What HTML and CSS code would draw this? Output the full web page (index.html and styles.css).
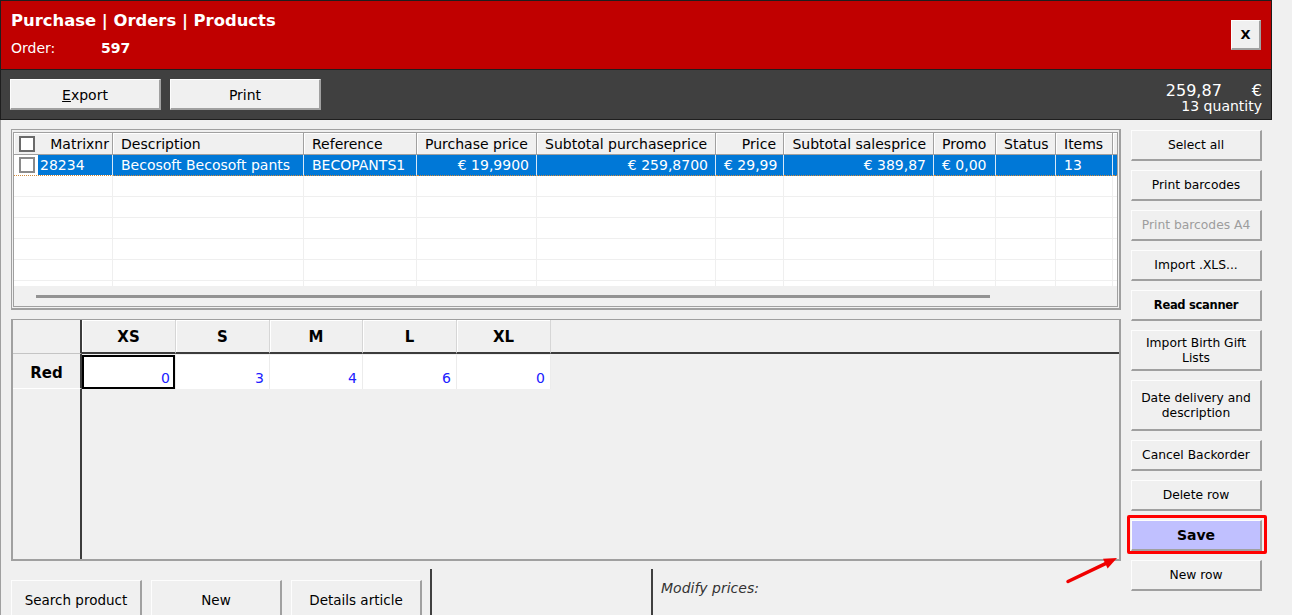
FILE: index.html
```html
<!DOCTYPE html>
<html lang="en">
<head>
  <meta charset="UTF-8">
  <title>Purchase | Orders | Products</title>
  <link rel="stylesheet" href="styles.css">
</head>
<body>

  <div class="window">
    <header class="titlebar">
      <div class="titles">
        <h1>Purchase | Orders | Products</h1>
        <div class="order"><span class="order-label">Order:</span><b>597</b></div>
      </div>
      <button class="btn close">X</button>
    </header>

    <div class="toolbar">
      <button class="btn tool"><u>E</u>xport</button>
      <button class="btn tool">Print</button>
      <div class="totals">
        <div class="amount"><span>259,87</span><span class="cur">€</span></div>
        <div class="qty">13 quantity</div>
      </div>
    </div>

    <div class="main">
      <div class="left">

        <div class="products">
          <div class="products-inner">
            <div class="rows">
              <div class="row head">
                <div class="cell first"><span class="check"></span><span>Matrixnr</span></div>
                <div class="cell">Description</div>
                <div class="cell">Reference</div>
                <div class="cell">Purchase price</div>
                <div class="cell">Subtotal purchaseprice</div>
                <div class="cell r">Price</div>
                <div class="cell r">Subtotal salesprice</div>
                <div class="cell">Promo</div>
                <div class="cell">Status</div>
                <div class="cell">Items</div>
                <div class="cell"></div>
              </div>
              <div class="row selected">
                <div class="cell first"><span class="check"></span><span class="val">28234</span></div>
                <div class="cell">Becosoft Becosoft pants</div>
                <div class="cell">BECOPANTS1</div>
                <div class="cell r">€ 19,9900</div>
                <div class="cell r">€ 259,8700</div>
                <div class="cell">€ 29,99</div>
                <div class="cell r">€ 389,87</div>
                <div class="cell">€ 0,00</div>
                <div class="cell"></div>
                <div class="cell">13</div>
                <div class="cell"></div>
              </div>
              <div class="row"><div class="cell"></div><div class="cell"></div><div class="cell"></div><div class="cell"></div><div class="cell"></div><div class="cell"></div><div class="cell"></div><div class="cell"></div><div class="cell"></div><div class="cell"></div><div class="cell"></div></div>
              <div class="row"><div class="cell"></div><div class="cell"></div><div class="cell"></div><div class="cell"></div><div class="cell"></div><div class="cell"></div><div class="cell"></div><div class="cell"></div><div class="cell"></div><div class="cell"></div><div class="cell"></div></div>
              <div class="row"><div class="cell"></div><div class="cell"></div><div class="cell"></div><div class="cell"></div><div class="cell"></div><div class="cell"></div><div class="cell"></div><div class="cell"></div><div class="cell"></div><div class="cell"></div><div class="cell"></div></div>
              <div class="row"><div class="cell"></div><div class="cell"></div><div class="cell"></div><div class="cell"></div><div class="cell"></div><div class="cell"></div><div class="cell"></div><div class="cell"></div><div class="cell"></div><div class="cell"></div><div class="cell"></div></div>
              <div class="row"><div class="cell"></div><div class="cell"></div><div class="cell"></div><div class="cell"></div><div class="cell"></div><div class="cell"></div><div class="cell"></div><div class="cell"></div><div class="cell"></div><div class="cell"></div><div class="cell"></div></div>
              <div class="row"><div class="cell"></div><div class="cell"></div><div class="cell"></div><div class="cell"></div><div class="cell"></div><div class="cell"></div><div class="cell"></div><div class="cell"></div><div class="cell"></div><div class="cell"></div><div class="cell"></div></div>
            </div>
            <div class="hscroll"><div class="thumb"></div></div>
          </div>
        </div>

        <div class="sizes">
          <div class="corner"></div>
          <div class="size-head">XS</div>
          <div class="size-head">S</div>
          <div class="size-head">M</div>
          <div class="size-head">L</div>
          <div class="size-head">XL</div>
          <div class="size-head empty"></div>

          <div class="color-head">Red</div>
          <div class="qty-cell current">0</div>
          <div class="qty-cell">3</div>
          <div class="qty-cell">4</div>
          <div class="qty-cell">6</div>
          <div class="qty-cell">0</div>
          <div class="fill"></div>

          <div class="color-fill"></div>
        </div>

        <div class="bottom">
          <button class="btn">Search product</button>
          <button class="btn">New</button>
          <button class="btn last">Details article</button>
          <div class="divider"></div>
          <div class="divider wide"></div>
          <div class="modify">Modify prices:</div>
        </div>
      </div>

      <div class="actions">
        <button class="btn">Select all</button>
        <button class="btn">Print barcodes</button>
        <button class="btn disabled">Print barcodes A4</button>
        <button class="btn">Import .XLS...</button>
        <button class="btn strong">Read scanner</button>
        <button class="btn two">Import Birth Gift Lists</button>
        <button class="btn tall">Date delivery and description</button>
        <button class="btn">Cancel Backorder</button>
        <button class="btn">Delete row</button>
        <button class="btn save">Save<span class="mark"></span></button>
        <button class="btn">New row</button>
      </div>
    </div>
  </div>

  <svg class="arrow" width="64" height="40" viewBox="0 0 64 40">
    <line x1="8" y1="31.5" x2="46" y2="13.4" stroke="#f00000" stroke-width="3.5" stroke-linecap="round"/>
    <polygon points="57,8 47.6,18.4 43,8.8" fill="#f00000"/>
  </svg>

</body>
</html>
```

FILE: styles.css
```css
* {
  box-sizing: border-box;
}

html, body {
  height: 100%;
  overflow: hidden;
}

body {
  margin: 0;
  position: relative;
  font-family: "DejaVu Sans", Verdana, sans-serif;
  background-color: #f0f0f0;
  color: #000;
}

.window {
  width: 1272px;
}

/* cabecalho vermelho */
.titlebar {
  display: flex;
  justify-content: space-between;
  align-items: center;
  height: 70px;
  padding: 0 9px 0 10px;
  background-color: #c00000;
  border: 1px solid #1e1e1e;
  color: #fff;
}

.titles {
  align-self: flex-start;
  padding-top: 10px;
}

.titles h1 {
  margin: 0;
  font-size: 16.4px;
  line-height: 20px;
}

.order {
  display: flex;
  margin-top: 8px;
  font-size: 14px;
  line-height: 18px;
}

.order-label {
  width: 90px;
}

.btn {
  padding: 0;
  font-family: inherit;
  color: #000;
  background-color: #f0f0f0;
  border-style: solid;
  border-width: 1px 2px 2px 1px;
  border-color: #fdfdfd #a0a0a0 #a0a0a0 #fdfdfd;
  cursor: pointer;
}

.close {
  width: 30px;
  height: 30px;
  margin-right: 1px;
  font-size: 13px;
  font-weight: bold;
}

/* barra escura */
.toolbar {
  display: flex;
  align-items: flex-start;
  gap: 9px;
  height: 50px;
  padding: 9px 9px 0 9px;
  background-color: #404040;
  border: 1px solid #1e1e1e;
  border-top: none;
}

.tool {
  width: 151px;
  height: 31px;
  padding-top: 1px;
  font-size: 14px;
}

.totals {
  margin-left: auto;
  margin-top: 4px;
  color: #fff;
  text-align: right;
}

.amount {
  display: flex;
  justify-content: flex-end;
  font-size: 16px;
  line-height: 16px;
}

.cur {
  margin-left: 30px;
}

.qty {
  font-size: 14px;
  line-height: 15px;
}

/* area principal */
.main {
  display: flex;
  gap: 10px;
  height: 495px;
  padding: 9px 0 0 10px;
  border-left: 1px solid #a0a0a0;
}

.left {
  width: 1110px;
}

.products {
  height: 181px;
  padding: 2px 1px 1px 1px;
  border: 1px solid #a0a0a0;
  border-right-width: 2px;
  border-bottom-width: 2px;
}

.products-inner {
  display: flex;
  flex-direction: column;
  height: 100%;
  border: 1px solid #a0a0a0;
}

.rows {
  height: 153px;
  overflow: hidden;
  background-color: #fff;
}

.row {
  display: grid;
  grid-template-columns: 99px 191px 113px 120px 179px 68px 150px 62px 60px 57px 1fr;
  height: 21px;
  font-size: 14px;
  line-height: 20px;
}

.cell {
  padding: 0 7px 0 8px;
  white-space: nowrap;
  overflow: hidden;
  border-right: 1px solid #efefef;
  border-bottom: 1px solid #efefef;
}

.cell.r {
  text-align: right;
}

.row.head {
  height: 22px;
  background-color: #f0f0f0;
}

.head .cell {
  padding-top: 1px;
  border-right-color: #a0a0a0;
  border-bottom-color: #a0a0a0;
  box-shadow: inset 1px 1px #fff;
}

.head .cell.first {
  display: flex;
  justify-content: space-between;
  align-items: center;
  padding: 0 3px 0 5px;
}

.check {
  display: inline-block;
  width: 16px;
  height: 16px;
  background-color: #fff;
  border: 2px solid #6a6a6a;
}

.selected .cell {
  background-color: #0078d7;
  color: #fff;
  border-right-color: #d6e8f8;
  border-bottom: 1px dotted #d08a3c;
}

.selected .cell.first {
  display: flex;
  padding: 0;
  background-color: #fff;
}

.selected .check {
  margin: 2px 3px 0 5px;
  border-color: #8a8a8a;
}

.selected .val {
  flex: 1;
  padding-left: 2px;
  background-color: #0078d7;
}

.hscroll {
  flex: 1;
  background-color: #f0f0f0;
}

.thumb {
  width: 954px;
  height: 3px;
  margin: 9px 0 0 22px;
  background-color: #939393;
}

/* grade de tamanhos */
.sizes {
  display: grid;
  grid-template-columns: 69px 94px 94px 93px 94px 94px 1fr;
  grid-template-rows: 34px 35px 1fr;
  height: 242px;
  margin-top: 9px;
  border: 2px solid #a0a0a0;
  border-top-width: 1px;
}

.corner {
  border-right: 2px solid #3c3c3c;
  border-bottom: 1px solid #c4c4c4;
}

.size-head {
  display: flex;
  justify-content: center;
  align-items: center;
  padding-top: 2px;
  font-size: 15px;
  font-weight: bold;
  border-right: 1px solid #d6d6d6;
  border-bottom: 2px solid #3c3c3c;
  box-shadow: inset 1px 1px #fff;
}

.size-head.empty {
  border-right: none;
  box-shadow: none;
}

.color-head {
  display: flex;
  justify-content: center;
  align-items: center;
  padding-top: 3px;
  font-size: 15px;
  font-weight: bold;
  border-right: 2px solid #3c3c3c;
  border-bottom: 1px solid #fff;
}

.qty-cell {
  display: flex;
  justify-content: flex-end;
  align-items: flex-end;
  padding: 0 5px 3px 0;
  font-size: 14px;
  line-height: 16px;
  color: #2020ff;
  background-color: #fff;
  border-top: 1px solid #f0f0f0;
  border-right: 1px solid #ececec;
}

.qty-cell.current {
  box-shadow: inset 0 0 0 2px #000;
}

.color-fill {
  border-right: 2px solid #3c3c3c;
}

/* rodape */
.bottom {
  display: flex;
  align-items: flex-start;
  height: 54px;
  overflow: hidden;
}

.bottom .btn {
  width: 131px;
  height: 40px;
  margin: 19px 9px 0 0;
  font-size: 13.5px;
}

.bottom .btn.last {
  margin-right: 8px;
}

.divider {
  width: 2px;
  height: 60px;
  margin-top: 8px;
  background-color: #404040;
}

.divider.wide {
  margin-left: 219px;
}

.modify {
  margin: 18px 0 0 8px;
  font-size: 14px;
  line-height: 18px;
  font-style: italic;
  color: #333;
}

/* botoes da direita */
.actions {
  display: flex;
  flex-direction: column;
  gap: 9px;
  width: 131px;
  margin-top: 1px;
}

.actions .btn {
  height: 31px;
  padding-top: 1px;
  font-size: 12.3px;
  line-height: 15px;
}

.actions .two {
  height: 41px;
}

.actions .tall {
  height: 51px;
}

.actions .disabled {
  color: #9d9d9d;
}

.actions .strong {
  font-size: 11.5px;
  font-weight: bold;
  letter-spacing: -0.3px;
}

.actions .save {
  position: relative;
  font-size: 14px;
  font-weight: bold;
  background-color: #c0c0ff;
}

.mark {
  position: absolute;
  left: -5px;
  top: -6px;
  right: -7px;
  bottom: -5px;
  border: 3px solid #f00;
  border-radius: 2px;
}

.arrow {
  position: absolute;
  left: 1060px;
  top: 550px;
}
```
